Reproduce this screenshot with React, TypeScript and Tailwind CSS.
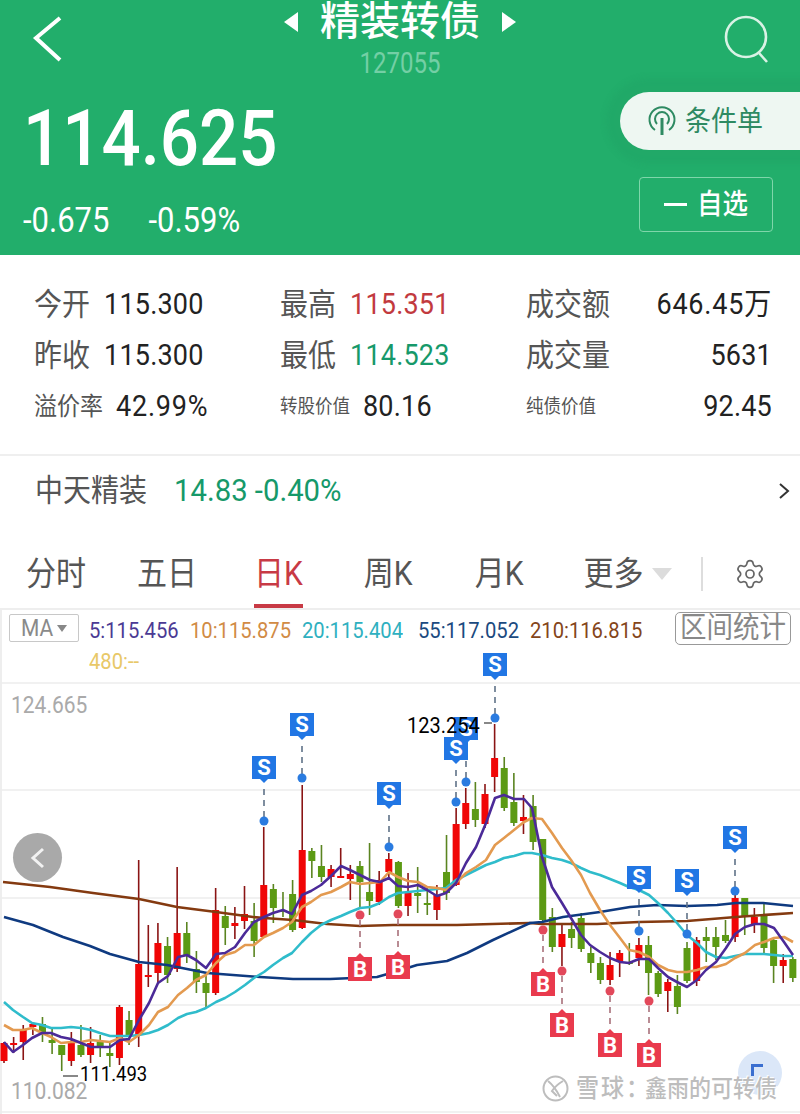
import React from "react";
import { Settings } from "lucide-react";

type Candle = [string, number, number, number, number];

const candles: Candle[] = [
  ["r",1042,1043,1061,1063],["r",1037,1043,1045,1053],["r",1025,1029,1042,1060],["r",1023,1024,1027,1035],
  ["g",1017,1024,1032,1042],["g",1028,1040,1043,1054],["g",1045,1045,1055,1071],["r",1032,1043,1061,1066],
  ["g",1025,1045,1055,1057],["r",1027,1043,1055,1063],["g",1035,1042,1047,1057],["g",1043,1053,1056,1067],
  ["r",1005,1007,1058,1065],["g",1011,1020,1035,1045],["r",860,964,1035,1047],["r",925,975,977,987],
  ["r",923,943,973,983],["g",937,946,975,983],["r",867,933,969,972],["g",922,933,955,963],
  ["g",951,969,982,993],["g",975,983,993,1007],["r",888,910,993,995],["g",906,916,928,945],
  ["r",907,923,926,939],["r",886,914,921,929],["g",903,921,941,957],["r",827,885,937,938],
  ["g",884,889,908,923],["g",892,910,912,917],["g",880,894,930,932],["r",785,850,928,929],
  ["g",848,851,861,878],["g",845,866,877,882],["r",865,869,877,887],["r",848,876,877,878],
  ["r",865,874,879,900],["g",861,866,882,908],["g",843,892,901,915],["r",871,880,902,905],
  ["r",853,859,872,877],["g",861,862,906,908],["r",873,892,906,916],["g",867,893,896,913],
  ["g",887,903,904,915],["r",885,895,910,920],["g",835,872,893,900],["r",808,824,885,886],
  ["r",788,803,824,829],["g",782,809,820,827],["r",784,794,824,828],["r",724,758,777,792],
  ["g",757,768,808,811],["g",773,802,823,826],["r",795,817,821,834],["g",795,806,842,850],
  ["g",839,839,920,921],["g",908,917,947,952],["r",925,934,947,966],["g",922,929,938,948],
  ["g",913,918,949,952],["g",947,953,963,973],["g",957,963,980,984],["r",952,965,980,985],
  ["r",950,953,961,977],["g",943,962,963,965],["r",938,945,958,966],["g",936,945,973,995],
  ["g",971,973,994,997],["r",979,982,991,1012],["g",975,986,1007,1014],["g",942,948,981,983],
  ["r",937,940,981,986],["g",927,937,941,962],["g",927,937,947,960],["g",920,935,941,943],
  ["r",895,898,937,942],["g",898,898,917,935],["r",908,917,924,933],["g",903,916,948,953],
  ["g",938,940,966,983],["r",954,960,966,983],["g",957,959,978,982],
];

const ma5 = "4,1042 13,1052 23,1045 32,1038 42,1033 51,1033 61,1037 71,1039 81,1043 91,1047 100,1047 110,1047 120,1040 129,1039 139,1020 149,1003 158,983 168,976 178,957 187,955 196,960 206,968 216,954 225,953 235,947 245,933 254,922 264,917 273,913 283,910 292,914 302,895 311,891 321,885 331,876 341,866 350,870 360,875 370,880 380,882 389,878 398,886 408,887 418,885 427,890 437,896 446,893 456,883 466,863 476,847 486,823 495,798 504,795 514,799 524,799 532,808 542,857 552,887 562,903 571,918 581,935 590,945 600,952 610,958 620,962 629,963 639,959 649,959 658,968 668,977 677,982 687,987 697,980 706,970 716,962 726,948 735,934 745,927 755,924 764,924 774,928 784,942 793,955";
const ma10 = "4,1025 13,1030 23,1030 32,1028 42,1033 51,1037 61,1043 71,1042 81,1042 91,1040 100,1041 110,1042 120,1038 129,1042 139,1035 149,1025 158,1012 168,1007 178,995 187,988 196,980 206,975 216,963 225,955 235,952 245,945 254,945 264,937 273,933 283,928 292,922 302,907 311,902 321,895 331,892 341,887 350,882 360,884 370,883 380,882 389,872 398,877 408,881 418,882 427,887 437,888 446,890 456,883 466,873 476,867 486,860 495,845 504,838 514,830 524,822 532,818 542,819 552,833 562,848 571,860 581,875 590,893 600,910 610,925 620,938 629,950 639,952 649,957 658,965 668,970 677,972 687,972 697,970 706,967 716,967 726,964 735,958 745,953 755,945 764,942 774,938 784,937 793,942";
const ma20 = "4,1002 13,1010 23,1017 32,1023 42,1025 51,1028 61,1028 71,1027 81,1028 91,1030 100,1033 110,1036 120,1036 129,1036 139,1035 149,1033 158,1030 168,1025 178,1018 187,1014 196,1012 206,1008 216,1002 225,998 235,992 245,985 254,978 264,972 273,965 283,958 292,953 302,942 311,933 321,925 331,920 341,916 350,912 360,908 370,907 380,903 389,897 398,893 408,892 418,891 427,890 437,889 446,888 456,880 466,875 476,870 486,865 495,862 504,858 514,856 524,853 532,853 542,855 552,858 562,860 571,863 581,868 590,872 600,875 610,879 620,883 629,887 639,890 649,895 658,903 668,913 677,923 687,935 697,943 706,952 716,957 726,958 735,956 745,954 755,954 764,954 774,955 784,956 793,956";
const ma55 = "4,917 33,925 63,937 90,946 110,954 139,962 167,965 207,973 233,975 260,977 293,979 330,979 377,977 398,971 417,965 447,961 467,953 493,940 530,923 542,922 563,917 600,912 630,907 657,905 687,906 717,905 736,903 763,903 793,906";
const ma210 = "3,882 50,887 93,893 139,899 177,907 216,912 253,917 264,918 293,920 327,924 360,926 393,925 457,925 530,923 542,924 597,924 639,922 687,921 736,917 793,913";

const sells = [[264,756,821],[302,713,778],[389,782,847],[466,717,782],[456,737,802],[495,653,718],[639,866,931],[687,869,934],[735,826,891]];
const buys = [[360,953,915],[398,951,914],[543,968,930],[562,1009,971],[610,1029,991],[649,1039,1001]];

function Chart() {
  return (
    <svg viewBox="0 683 800 431" className="block h-[431px] w-full overflow-visible">
      {[683, 790, 898, 1005, 1112].map((y) => (
        <line key={y} x1="0" x2="800" y1={y} y2={y} stroke="#ececec" strokeWidth="1.5" />
      ))}
      {candles.map(([c, wt, bt, bb, wb], i) => {
        const x = 4 + i * 9.62;
        return (
          <g key={i}>
            <line x1={x} x2={x} y1={wt} y2={wb} stroke={c === "r" ? "#8a1414" : "#5a8420"} strokeWidth="1.6" />
            <rect x={x - 3.5} y={bt} width="7" height={Math.max(bb - bt, 2)} fill={c === "r" ? "#f00606" : "#5c9a14"} />
          </g>
        );
      })}
      <polyline points={ma210} fill="none" stroke="#843a10" strokeWidth="2.6" strokeLinejoin="round" />
      <polyline points={ma55} fill="none" stroke="#0f3a80" strokeWidth="2.6" strokeLinejoin="round" />
      <polyline points={ma20} fill="none" stroke="#2fbccb" strokeWidth="2.6" strokeLinejoin="round" />
      <polyline points={ma10} fill="none" stroke="#e39a50" strokeWidth="2.6" strokeLinejoin="round" />
      <polyline points={ma5} fill="none" stroke="#4b2a98" strokeWidth="2.6" strokeLinejoin="round" />
      {sells.map(([x, t, d]) => (
        <g key={x}>
          <line x1={x} x2={x} y1={t + 33} y2={d - 4} stroke="#5f7288" strokeWidth="1.6" strokeDasharray="6 5" />
          <circle cx={x} cy={d} r="4.5" fill="#2a7be0" />
          <path d={`M${x - 12} ${t}h24v23h-8l-4 4-4-4h-8z`} fill="#2176e4" />
          <text x={x} y={t + 19} textAnchor="middle" fontSize="22" fontWeight="700" fill="#fff" fontFamily="Roboto, sans-serif">S</text>
        </g>
      ))}
      {buys.map(([x, t, d]) => (
        <g key={x}>
          <line x1={x} x2={x} y1={d + 5} y2={t - 4} stroke="#a8707a" strokeWidth="1.6" strokeDasharray="6 5" />
          <circle cx={x} cy={d} r="4.5" fill="#e2485a" />
          <path d={`M${x - 12} ${t + 4}h8l4-4 4 4h8v24h-24z`} fill="#e93a4d" />
          <text x={x} y={t + 24} textAnchor="middle" fontSize="22" fontWeight="700" fill="#fff" fontFamily="Roboto, sans-serif">B</text>
        </g>
      ))}
    </svg>
  );
}

function StatLabel({ children, small }: { children: React.ReactNode; small?: "m" | "s" }) {
  const size = small === "m" ? "text-[23px]" : small === "s" ? "text-[17.5px]" : "text-[28px]";
  return <span className={`${size} scale-y-110 text-[#555] leading-none`}>{children}</span>;
}

function StatValue({ children, color = "text-[#222]", wide }: { children: React.ReactNode; color?: string; wide?: boolean }) {
  return <span className={`text-[27px] scale-y-110 leading-none ${wide ? "tracking-[0.8px]" : "tracking-[0.2px]"} ${color}`}>{children}</span>;
}

const Row = ({ children, className = "" }: { children: React.ReactNode; className?: string }) => (
  <div className={`flex h-[51px] items-center ${className}`}>{children}</div>
);

export default function App() {
  return (
    <div className="h-[1114px] w-[800px] overflow-hidden bg-white [font-family:Roboto,'Noto_Sans_CJK_SC',sans-serif]">
      {/* Header */}
      <header className="flex h-[255px] flex-col bg-[#22ae6b] text-white">
        <div className="grid h-[92px] grid-cols-[1fr_auto_1fr] items-start">
          <div className="pl-[32px] pt-[14px]">
            <svg width="34" height="50" viewBox="0 0 34 50" fill="none" stroke="#fff" strokeWidth="4">
              <path d="M28 4 4 24l24 22" />
            </svg>
          </div>
          <div className="flex flex-col items-center">
            <div className="flex items-center gap-[22px]">
              <svg width="14" height="20" viewBox="0 0 14 20"><path d="M14 0v20L0 10z" fill="#fff" /></svg>
              <span className="h-[44px] text-[40px] font-medium leading-[44px]">精装转债</span>
              <svg width="14" height="20" viewBox="0 0 14 20"><path d="M0 0v20l14-10z" fill="#fff" /></svg>
            </div>
            <span className="mt-[6px] scale-y-[1.2] text-[24px] leading-[26px] text-[#74cfa5]">127055</span>
          </div>
          <div className="flex justify-end pr-[30px] pt-[15px]">
            <svg width="46" height="48" viewBox="0 0 46 48" fill="none" stroke="#d9f2e5" strokeWidth="2.6">
              <ellipse cx="22" cy="22" rx="20" ry="20" />
              <path d="m35 38 8 9" />
            </svg>
          </div>
        </div>
        <div className="flex flex-1 justify-between">
          <div className="pl-[23px]">
            <div className="mt-[12px] h-[69px] scale-y-[1.12] text-[69px] font-medium leading-[69px]">114.625</div>
            <div className="mt-[32px] flex gap-[39px] text-[31px] leading-[30px]">
              <span className="scale-y-[1.15]">-0.675</span>
              <span className="scale-y-[1.15]">-0.59%</span>
            </div>
          </div>
          <div className="flex flex-col items-end">
            <div className="flex h-[58px] w-[180px] items-center gap-[8px] rounded-l-full bg-[#eef7f2] pl-[27px] text-[#2e8a62] shadow-[0_0_6px_14px_rgba(30,150,95,0.2)]">
              <svg width="30" height="32" viewBox="0 0 30 32" fill="none" stroke="#2e8a62" strokeWidth="2">
                <path d="M8 25a12.5 12.5 0 1 1 14 0" />
                <path d="M10 19a7 7 0 1 1 10 0" />
                <path d="M15 13v17" strokeWidth="3" />
              </svg>
              <span className="scale-y-110 text-[26px] leading-none">条件单</span>
            </div>
            <div className="mr-[27px] mt-[27px] flex h-[55px] w-[134px] items-center rounded-[4px] border-[1.5px] border-[#7fd6aa] pl-[24px]">
              <span className="h-[3px] w-[23px] bg-white" />
              <span className="ml-[10px] scale-y-110 text-[25.5px] font-medium leading-none">自选</span>
            </div>
          </div>
        </div>
      </header>

      {/* Stats */}
      <section className="h-[199px] pt-[24px]">
        <div className="grid grid-cols-[246px_246px_246px] pl-[34px]">
          <div>
            <Row className="gap-[14px]"><StatLabel>今开</StatLabel><StatValue>115.300</StatValue></Row>
            <Row className="gap-[14px]"><StatLabel>昨收</StatLabel><StatValue>115.300</StatValue></Row>
            <Row className="gap-[13px]"><StatLabel small="m">溢价率</StatLabel><StatValue wide>42.99%</StatValue></Row>
          </div>
          <div>
            <Row className="gap-[14px]"><StatLabel>最高</StatLabel><StatValue color="text-[#c23a3e]">115.351</StatValue></Row>
            <Row className="gap-[14px]"><StatLabel>最低</StatLabel><StatValue color="text-[#16996a]">114.523</StatValue></Row>
            <Row className="gap-[13px]"><StatLabel small="s">转股价值</StatLabel><StatValue>80.16</StatValue></Row>
          </div>
          <div>
            <Row className="justify-between"><StatLabel>成交额</StatLabel><StatValue wide>646.45万</StatValue></Row>
            <Row className="justify-between"><StatLabel>成交量</StatLabel><StatValue>5631</StatValue></Row>
            <Row className="justify-between"><StatLabel small="s">纯债价值</StatLabel><StatValue>92.45</StatValue></Row>
          </div>
        </div>
      </section>

      {/* Linked stock */}
      <div className="flex h-[71px] items-center border-t-2 border-[#efefef] pl-[35px] pr-[10px]">
        <span className="scale-y-110 text-[28px] leading-none text-[#555]">中天精装</span>
        <span className="ml-[27px] scale-y-110 text-[29.3px] leading-none text-[#16996a]">14.83 -0.40%</span>
        <svg className="ml-auto" width="12" height="18" viewBox="0 0 12 18" fill="none" stroke="#333" strokeWidth="2"><path d="m2 2 8 7-8 7" /></svg>
      </div>

      {/* Tabs */}
      <nav className="mt-[15px] flex h-[68px] items-stretch text-[30px] leading-none text-[#555]">
        <span className="ml-[26px] flex scale-y-110 items-center">分时</span>
        <span className="ml-[51px] flex scale-y-110 items-center">五日</span>
        <span className="ml-[57px] flex items-center border-b-4 border-[#c83a45] pt-1 text-[#c83a45]"><span className="scale-y-110">日K</span></span>
        <span className="ml-[61px] flex scale-y-110 items-center">周K</span>
        <span className="ml-[62px] flex scale-y-110 items-center">月K</span>
        <span className="ml-[60px] flex scale-y-110 items-center">更多</span>
        <span className="ml-[9px] flex items-center">
          <svg width="20" height="12" viewBox="0 0 20 12"><path d="M0 0h20L10 12z" fill="#dcdcdc" /></svg>
        </span>
        <span className="my-[17px] ml-[29px] w-[1.5px] bg-[#ddd]" />
        <span className="ml-[31px] flex items-center">
          <Settings size={32} strokeWidth={1.3} color="#666" />
        </span>
      </nav>

      {/* Chart */}
      <section className="relative h-[506px] border-t-2 border-[#eee] shadow-[inset_2px_0_0_#eee]">
        <div className="flex h-[73px] items-start pl-[9px] pr-[9px] pt-[4px]">
          <div className="flex h-[28px] w-[70px] items-center justify-center gap-[4px] rounded-[2px] border border-[#c8c8c8] text-[21px] text-[#8a8a8a]">
            <span className="scale-y-110 leading-none">MA</span>
            <svg width="10" height="7" viewBox="0 0 10 7"><path d="M0 0h10L5 7z" fill="#888" /></svg>
          </div>
          <div className="ml-[10px] flex w-[580px] flex-wrap pt-[1px] text-[20.2px] leading-[31px]">
            <span className="w-[101px] scale-y-110 text-[#4b3a94]">5:115.456</span>
            <span className="w-[112px] scale-y-110 text-[#d18b45]">10:115.875</span>
            <span className="w-[116px] scale-y-110 text-[#2fb0c0]">20:115.404</span>
            <span className="w-[112px] scale-y-110 text-[#1b4a80]">55:117.052</span>
            <span className="w-[110px] scale-y-110 text-[#84451a]">210:116.815</span>
            <span className="scale-y-110 text-[#e8c868]">480:--</span>
          </div>
          <div className="ml-auto -mt-[2px] flex h-[33px] w-[116px] items-center justify-center rounded-[5px] border-[1.5px] border-[#999] text-[26.5px] leading-none text-[#888]">
            <span className="scale-y-110">区间统计</span>
          </div>
        </div>
        <Chart />

        {/* Overlays */}
        <span className="absolute left-[11px] top-[85px] scale-y-110 text-[21px] leading-none text-[#aaa]">124.665</span>
        <span className="absolute left-[11px] top-[471px] scale-y-110 text-[21px] leading-none text-[#aaa]">110.082</span>
        <span className="absolute left-[407px] top-[105px] scale-y-110 text-[20px] leading-none text-black">123.254</span>
        <span className="absolute left-[484px] top-[112px] h-[1.5px] w-[8px] bg-[#888]" />
        <span className="absolute left-[63px] top-[465px] h-[1.5px] w-[15px] bg-[#888]" />
        <span className="absolute left-[80px] top-[455px] scale-y-110 text-[18.5px] leading-none text-black">111.493</span>

        <div className="absolute left-[13px] top-[223px] flex h-[49px] w-[49px] items-center justify-center rounded-full bg-[#a9a9a9]">
          <svg width="16" height="22" viewBox="0 0 16 22" fill="none" stroke="#f2f2f2" strokeWidth="3"><path d="M13 2 3 11l10 9" /></svg>
        </div>
        <div className="absolute left-[738px] top-[441px] h-[44px] w-[44px] rounded-full bg-[#dbe7f8] pl-[13px] pt-[13px]">
          <div className="h-[12px] w-[12px] border-l-[3px] border-t-[3px] border-[#3b6fd0]" />
        </div>
        <div className="absolute left-[542px] top-[465px] flex items-center gap-[7px] text-[23px] font-medium leading-none text-[#bdbdbd] [text-shadow:1px_1px_0_#fff,-1px_-1px_0_#fff]">
          <svg width="27" height="27" viewBox="0 0 27 27" fill="none" stroke="#bdbdbd" strokeWidth="2">
            <circle cx="13.5" cy="13.5" r="12" fill="#fff" />
            <path d="M6 6c5 4 9 10 12 16M21 6c-5 3-9 7-11 10l5 5" />
          </svg>
          <span className="scale-y-110 tracking-[2px]">雪球：</span>
          <span className="-ml-[13px] scale-y-110 text-[22px]">鑫雨的可转债</span>
        </div>
      </section>
    </div>
  );
}
